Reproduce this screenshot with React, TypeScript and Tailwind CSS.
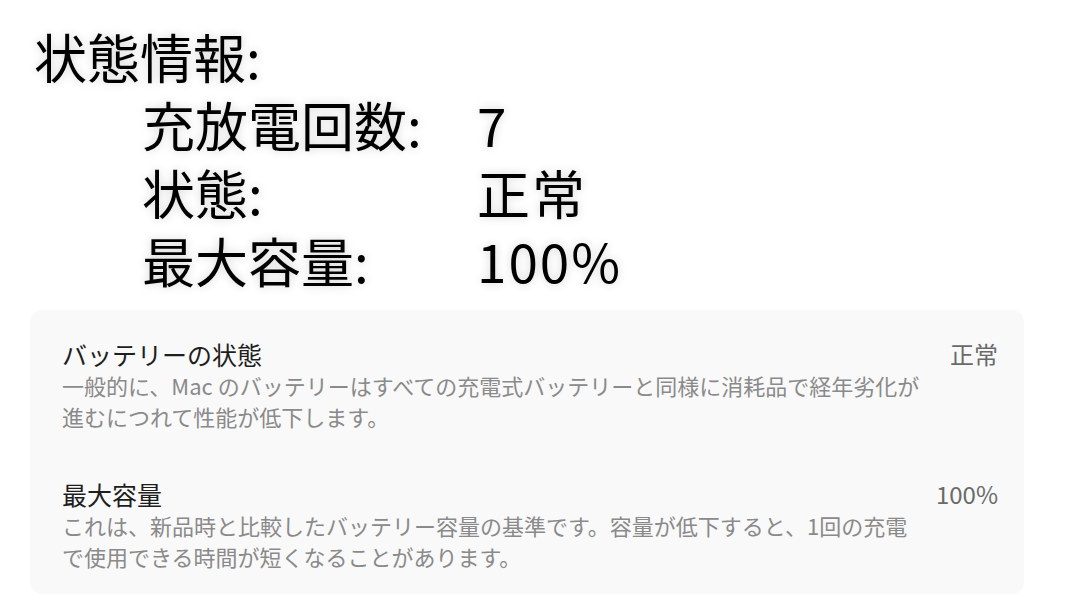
const jp = "font-['Noto_Sans_CJK_JP','Noto_Sans',sans-serif]";

type Stat = { label: string; value: string };

const stats: Stat[] = [
  { label: "充放電回数:", value: "7" },
  { label: "状態:", value: "正常" },
  { label: "最大容量:", value: "100%" },
];

type Setting = { title: string; lines: string[]; value: string };

const settings: Setting[] = [
  {
    title: "バッテリーの状態",
    lines: [
      "一般的に、Mac のバッテリーはすべての充電式バッテリーと同様に消耗品で経年劣化が",
      "進むにつれて性能が低下します。",
    ],
    value: "正常",
  },
  {
    title: "最大容量",
    lines: [
      "これは、新品時と比較したバッテリー容量の基準です。容量が低下すると、1回の充電",
      "で使用できる時間が短くなることがあります。",
    ],
    value: "100%",
  },
];

export default function App() {
  return (
    <main className={`${jp} h-[607px] w-[1080px] overflow-hidden bg-white`}>
      {/* enlarged system report excerpt */}
      <section className="pl-[34px] pt-[22px] text-[53px] leading-none text-black [text-shadow:0_0_10px_rgba(0,0,0,0.18)]">
        <h1 className="flex h-[68px] items-center font-normal">状態情報:</h1>
        <div className="pl-[108px]">
          {stats.map((s) => (
            <div key={s.label} className="flex h-[68px] items-center">
              <span className="w-[335px]">{s.label}</span>
              <span className="tracking-[2px]">{s.value}</span>
            </div>
          ))}
        </div>
      </section>

      {/* battery settings panel */}
      <section className="ml-[30px] mr-[56px] mt-[16px] flex flex-col gap-[46px] rounded-xl bg-[#f9f9f9] pb-[22px] pl-[32px] pt-[28px]">
        {settings.map((s) => (
          <div key={s.title} className="flex items-start justify-between">
            <div>
              <h2 className="text-[25px] leading-[32px] text-[#1e1e1e]">{s.title}</h2>
              {s.lines.map((l) => (
                <p key={l} className="text-[22px] leading-[31px] text-[#8a8a8a]">
                  {l}
                </p>
              ))}
            </div>
            <span className="pr-[26px] text-[24px] leading-[32px] text-[#6a6a6a]">{s.value}</span>
          </div>
        ))}
      </section>
    </main>
  );
}
